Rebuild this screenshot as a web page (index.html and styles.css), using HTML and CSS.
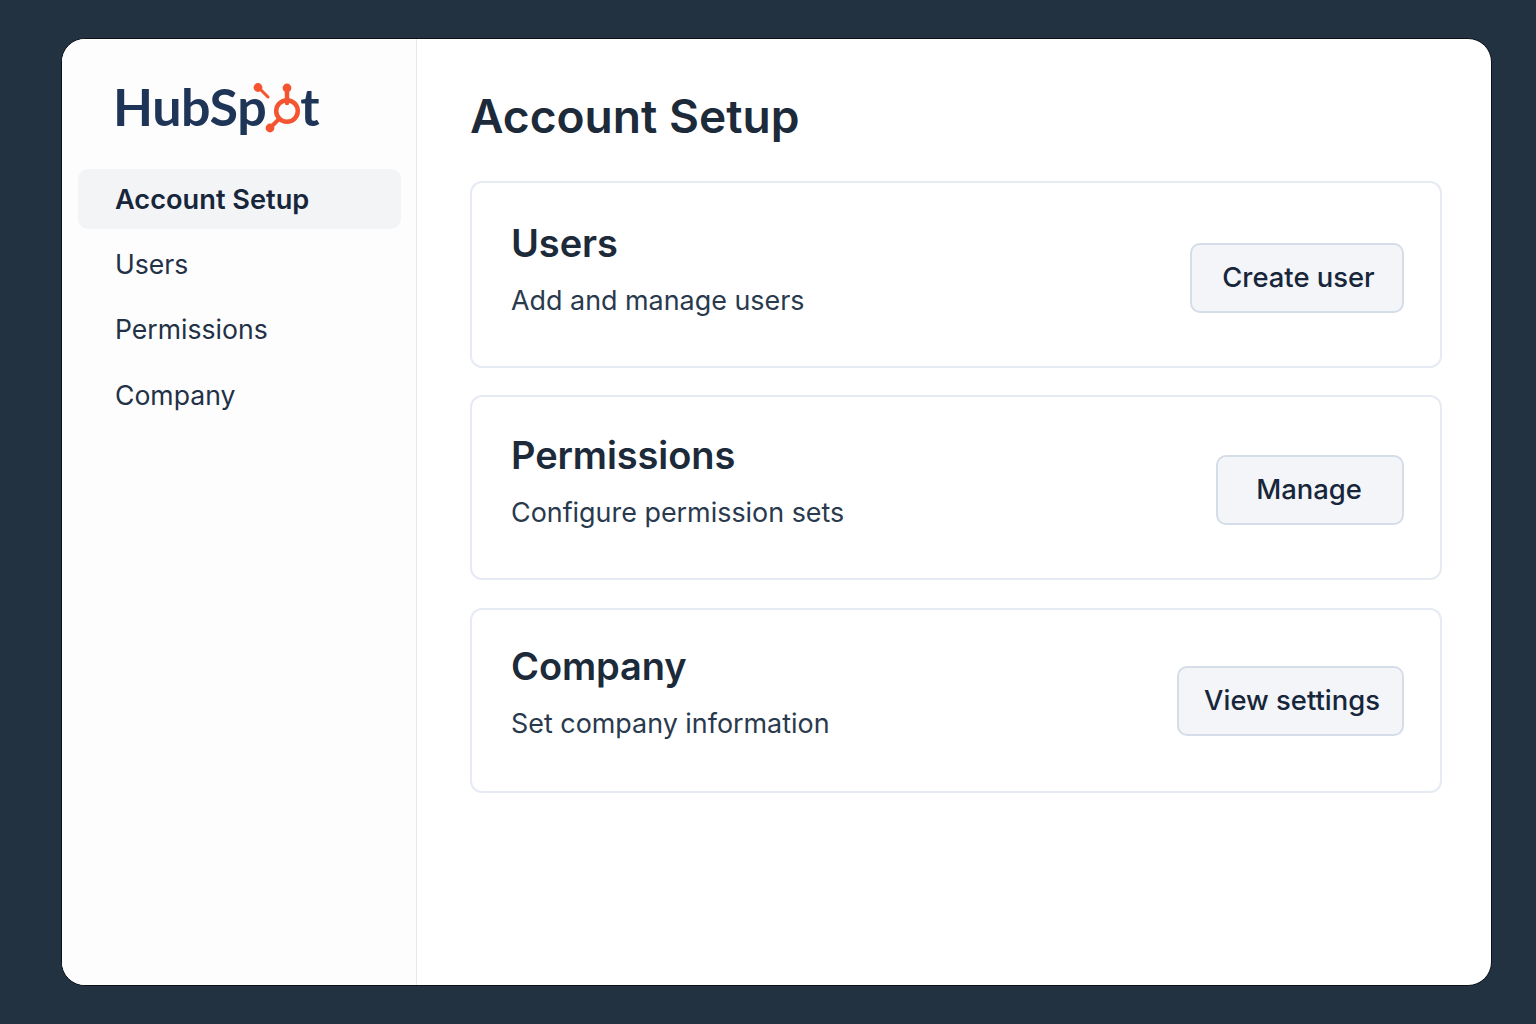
FILE: index.html
```html
<!DOCTYPE html>
<html lang="en">
<head>
<meta charset="utf-8">
<title>Account Setup</title>
<link rel="stylesheet" href="styles.css">
</head>
<body>
<div class="window">
  <aside class="sidebar">
    <div class="logo">
      <span class="logo-text">HubSp</span>
      <svg class="sprocket" width="50" height="52" viewBox="0 0 50 52" aria-hidden="true">
        <g fill="none" stroke="#f4542f" stroke-linecap="round">
          <line x1="5" y1="4" x2="15" y2="14" stroke-width="3"/>
          <line x1="34" y1="5" x2="34" y2="20" stroke-width="4.5"/>
          <line x1="26" y1="36" x2="17" y2="45" stroke-width="4"/>
          <circle cx="34" cy="28" r="10.8" stroke-width="4.5"/>
        </g>
        <g fill="#f4542f">
          <circle cx="5" cy="4.5" r="4.4"/>
          <circle cx="34" cy="5" r="4.4"/>
          <circle cx="17" cy="45" r="4.4"/>
        </g>
      </svg>
      <span class="logo-text logo-t">t</span>
    </div>
    <nav class="nav">
      <a class="nav-item active">Account Setup</a>
      <a class="nav-item">Users</a>
      <a class="nav-item">Permissions</a>
      <a class="nav-item">Company</a>
    </nav>
  </aside>
  <main class="main">
    <h1 class="title">Account Setup</h1>
    <section class="card card-users">
      <div class="card-text">
        <h2 class="card-title">Users</h2>
        <p class="card-desc">Add and manage users</p>
      </div>
      <button class="btn btn-users">Create user</button>
    </section>
    <section class="card card-perms">
      <div class="card-text">
        <h2 class="card-title">Permissions</h2>
        <p class="card-desc">Configure permission sets</p>
      </div>
      <button class="btn btn-manage">Manage</button>
    </section>
    <section class="card card-company">
      <div class="card-text">
        <h2 class="card-title">Company</h2>
        <p class="card-desc">Set company information</p>
      </div>
      <button class="btn btn-view">View settings</button>
    </section>
  </main>
</div>
</body>
</html>
```
FILE: styles.css
```css
* { box-sizing: border-box; }
html, body { margin: 0; height: 100%; }
body {
  background: #233241;
  padding: 38px 44px 38px 61px;
  font-family: Inter, "Liberation Sans", sans-serif;
  color: #1c2a3a;
  overflow: hidden;
}
.window {
  display: flex;
  height: 948px;
  background: #fff;
  border: 1px solid #0b1118;
  border-radius: 24px;
  overflow: hidden;
}
.sidebar {
  flex: none;
  width: 355px;
  padding: 33px 15px 0 16px;
  background: #fdfdfe;
  border-right: 1px solid #e4e9f1;
}
.logo {
  display: flex;
  align-items: flex-start;
  height: 97px;
  padding-left: 35px;
}
.logo-text {
  font-family: Lato, sans-serif;
  font-size: 52px;
  line-height: 69px;
  font-weight: 700;
  letter-spacing: -0.4px;
  color: #1e3557;
}
.sprocket { flex: none; margin: 11px 0 0 -13px; }
.logo-t { margin-left: -3px; }
.nav { display: flex; flex-direction: column; gap: 5.5px; }
.nav-item {
  display: block;
  height: 60px;
  line-height: 59px;
  padding-left: 37px;
  font-size: 26.6px;
  color: #223146;
  border-radius: 10px;
}
.nav-item.active {
  background: #f3f4f6;
  font-size: 27.2px;
  line-height: 61px;
  font-weight: 600;
  color: #17263a;
}
.main {
  flex: 1;
  padding: 46px 49px 0 53px;
}
.title {
  margin: 0 0 33px;
  font-size: 46.1px;
  line-height: 63px;
  font-weight: 600;
  color: #1c2a3a;
}
.card {
  display: flex;
  align-items: center;
  justify-content: space-between;
  height: 185px;
  margin-bottom: 28px;
  padding: 0 36px 0 39px;
  background: #fff;
  border: 2px solid #e6eaf2;
  border-radius: 12px;
}
.card-users { height: 187px; margin-bottom: 27px; }
.card-text { margin-top: -12px; }
.card-perms .card-text { margin-top: -14px; }
.card-company .card-text { margin-top: -18px; }
.card-title {
  margin: 0 0 15px;
  font-size: 38px;
  line-height: 48px;
  font-weight: 600;
  letter-spacing: -0.1px;
  color: #1c2a3a;
}
.card-desc {
  margin: 0;
  font-size: 26.9px;
  line-height: 36px;
  color: #2a3a4e;
}
.btn {
  flex: none;
  height: 70px;
  margin-top: 4px;
  padding: 0 0 2px 3px;
  background: #f3f5f8;
  border: 2px solid #d5dde8;
  border-radius: 10px;
  font: 500 27.4px Inter, "Liberation Sans", sans-serif;
  color: #17263a;
}
.btn-users { width: 214px; margin-top: 7px; }
.btn-manage { width: 188px; padding: 0 2px 2px 0; }
.btn-view { width: 227px; margin-top: 1px; }
```
